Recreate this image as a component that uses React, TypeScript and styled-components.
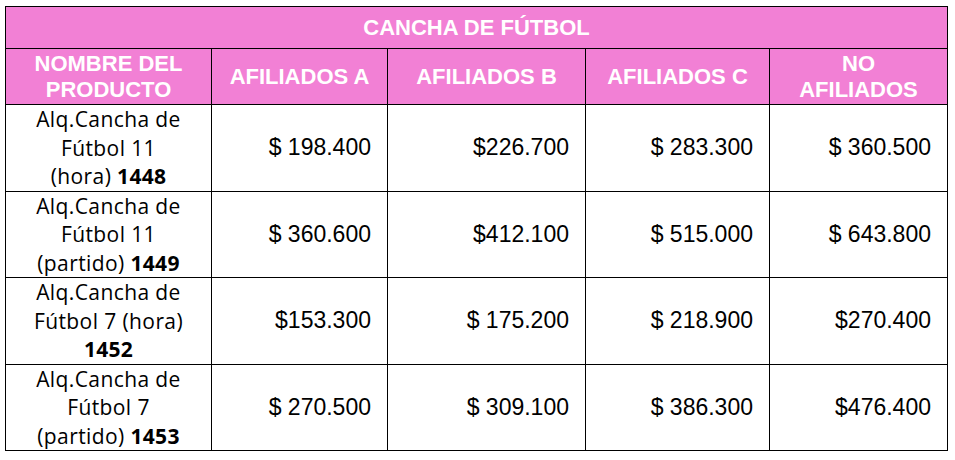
import React from "react";
import styled, { createGlobalStyle } from "styled-components";

const Global = createGlobalStyle`
  html, body { margin: 0; padding: 0; background: #ffffff; }
`;

const Page = styled.div`
  padding: 6px 0 0 5px;
`;

const Table = styled.table`
  border-collapse: collapse;
  table-layout: fixed;
  width: 942px;
  border: 1px solid #000;
`;

const TitleCell = styled.th`
  background: #f280d5;
  color: #fff;
  font-family: "Liberation Sans", Arial, sans-serif;
  font-weight: 700;
  font-size: 22px;
  height: 41px;
  padding: 0;
  border: 1px solid #000;
  text-align: center;
  vertical-align: middle;
`;

const HeadCell = styled.th`
  background: #f280d5;
  color: #fff;
  font-family: "Liberation Sans", Arial, sans-serif;
  font-weight: 700;
  font-size: 22px;
  line-height: 26px;
  height: 55px;
  padding: 0 4px;
  border: 1px solid #000;
  text-align: center;
  vertical-align: middle;
`;

const NameCell = styled.td`
  font-family: "Open Sans", "Noto Sans", sans-serif;
  font-size: 21px;
  letter-spacing: 0.4px;
  line-height: 28.5px;
  color: #000;
  height: 85px;
  padding: 0;
  border: 1px solid #000;
  text-align: center;
  vertical-align: middle;
`;

const Code = styled.b`
  font-weight: 700;
  letter-spacing: 0.3px;
`;

const PriceCell = styled.td`
  font-family: "Liberation Sans", Arial, sans-serif;
  font-size: 23px;
  color: #000;
  padding: 0 16px 0 0;
  border: 1px solid #000;
  text-align: right;
  vertical-align: middle;
`;

type Row = { lines: [string, string, string]; code: string; codeOwnLine?: boolean; prices: string[] };

const rows: Row[] = [
  { lines: ["Alq.Cancha de", "Fútbol 11", "(hora)"], code: "1448", prices: ["$ 198.400", "$226.700", "$ 283.300", "$ 360.500"] },
  { lines: ["Alq.Cancha de", "Fútbol 11", "(partido)"], code: "1449", prices: ["$ 360.600", "$412.100", "$ 515.000", "$ 643.800"] },
  { lines: ["Alq.Cancha de", "Fútbol 7 (hora)", ""], code: "1452", codeOwnLine: true, prices: ["$153.300", "$ 175.200", "$ 218.900", "$270.400"] },
  { lines: ["Alq.Cancha de", "Fútbol 7", "(partido)"], code: "1453", prices: ["$ 270.500", "$ 309.100", "$ 386.300", "$476.400"] },
];

export default function App() {
  return (
    <Page>
      <Global />
      <Table>
        <colgroup>
          <col style={{ width: 206 }} />
          <col style={{ width: 176 }} />
          <col style={{ width: 198 }} />
          <col style={{ width: 184 }} />
          <col style={{ width: 178 }} />
        </colgroup>
        <thead>
          <tr>
            <TitleCell colSpan={5}>CANCHA DE FÚTBOL</TitleCell>
          </tr>
          <tr>
            <HeadCell>NOMBRE DEL<br />PRODUCTO</HeadCell>
            <HeadCell>AFILIADOS A</HeadCell>
            <HeadCell>AFILIADOS B</HeadCell>
            <HeadCell>AFILIADOS C</HeadCell>
            <HeadCell>NO<br />AFILIADOS</HeadCell>
          </tr>
        </thead>
        <tbody>
          {rows.map((r) => (
            <tr key={r.code}>
              <NameCell>
                {r.lines[0]}
                <br />
                {r.lines[1]}
                <br />
                {r.codeOwnLine ? (
                  <Code>{r.code}</Code>
                ) : (
                  <>
                    {r.lines[2]} <Code>{r.code}</Code>
                  </>
                )}
              </NameCell>
              {r.prices.map((p, i) => (
                <PriceCell key={i}>{p}</PriceCell>
              ))}
            </tr>
          ))}
        </tbody>
      </Table>
    </Page>
  );
}
